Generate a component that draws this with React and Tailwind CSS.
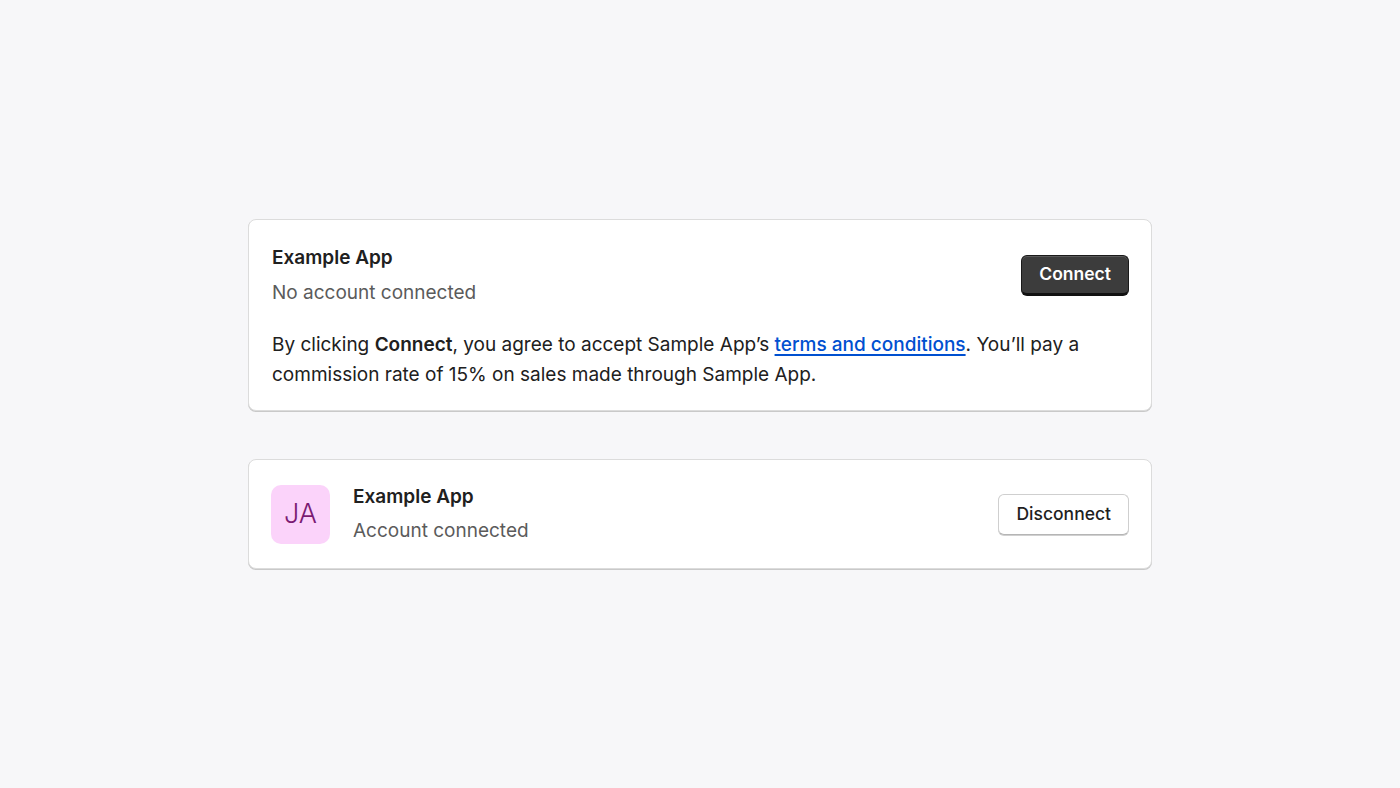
export default function App() {
  return (
    <div
      className="min-h-screen w-full bg-[#f7f7f9] flex flex-col items-center justify-center gap-12 text-[#202020]"
      style={{ fontFamily: "Inter, 'Noto Sans', sans-serif" }}
    >
      {/* connect card */}
      <div className="w-[904px] bg-white border border-[#dcdcdc] rounded-lg shadow-[0_1px_0_#c9c9c9] pl-[23px] pr-[22px] pt-6 pb-5">
        <div className="flex items-center justify-between">
          <div className="flex flex-col gap-[7px]">
            <h2 className="text-[19px] leading-7 font-semibold text-[#202020]">Example App</h2>
            <p className="text-[19px] leading-7 text-[#5b5b5b]">No account connected</p>
          </div>
          <button className="h-[41px] px-[17px] rounded-md bg-[#3c3c3c] border border-[#1a1a1a] border-b-[3px] border-b-[#111] text-white text-[17.5px] font-semibold shadow-[inset_0_1px_0_#5a5a5a]">
            Connect
          </button>
        </div>
        <p className="mt-[23px] text-[19px] leading-[30px] text-[#202020]">
          By clicking <span className="font-semibold">Connect</span>, you agree to accept Sample App’s{" "}
          <a href="#" className="text-[#0050d0] font-medium underline underline-offset-[3px] decoration-[1.5px]">
            terms and conditions
          </a>
          . You’ll pay a commission rate of 15% on sales made through Sample App.
        </p>
      </div>

      {/* connected card */}
      <div className="w-[904px] bg-white border border-[#dcdcdc] rounded-lg shadow-[0_1px_0_#c9c9c9] pl-[22px] pr-[22px] pt-[23px] pb-[23px]">
        <div className="flex items-center justify-between">
          <div className="flex items-center gap-[23px]">
            <div className="w-[59px] h-[59px] rounded-[10px] bg-[#fbd3fa] flex items-center justify-center text-[27px] font-light text-[#7a1a72]">
              JA
            </div>
            <div className="flex flex-col gap-[6px]">
              <h2 className="text-[19px] leading-7 font-semibold text-[#202020]">Example App</h2>
              <p className="text-[19px] leading-7 text-[#5b5b5b]">Account connected</p>
            </div>
          </div>
          <button className="h-[41px] px-[17px] rounded-md bg-white border border-[#cfcfcf] border-b-[#b5b5b5] shadow-[0_1px_0_#d0d0d0] text-[17.5px] font-medium text-[#1f1f1f]">
            Disconnect
          </button>
        </div>
      </div>
    </div>
  );
}
